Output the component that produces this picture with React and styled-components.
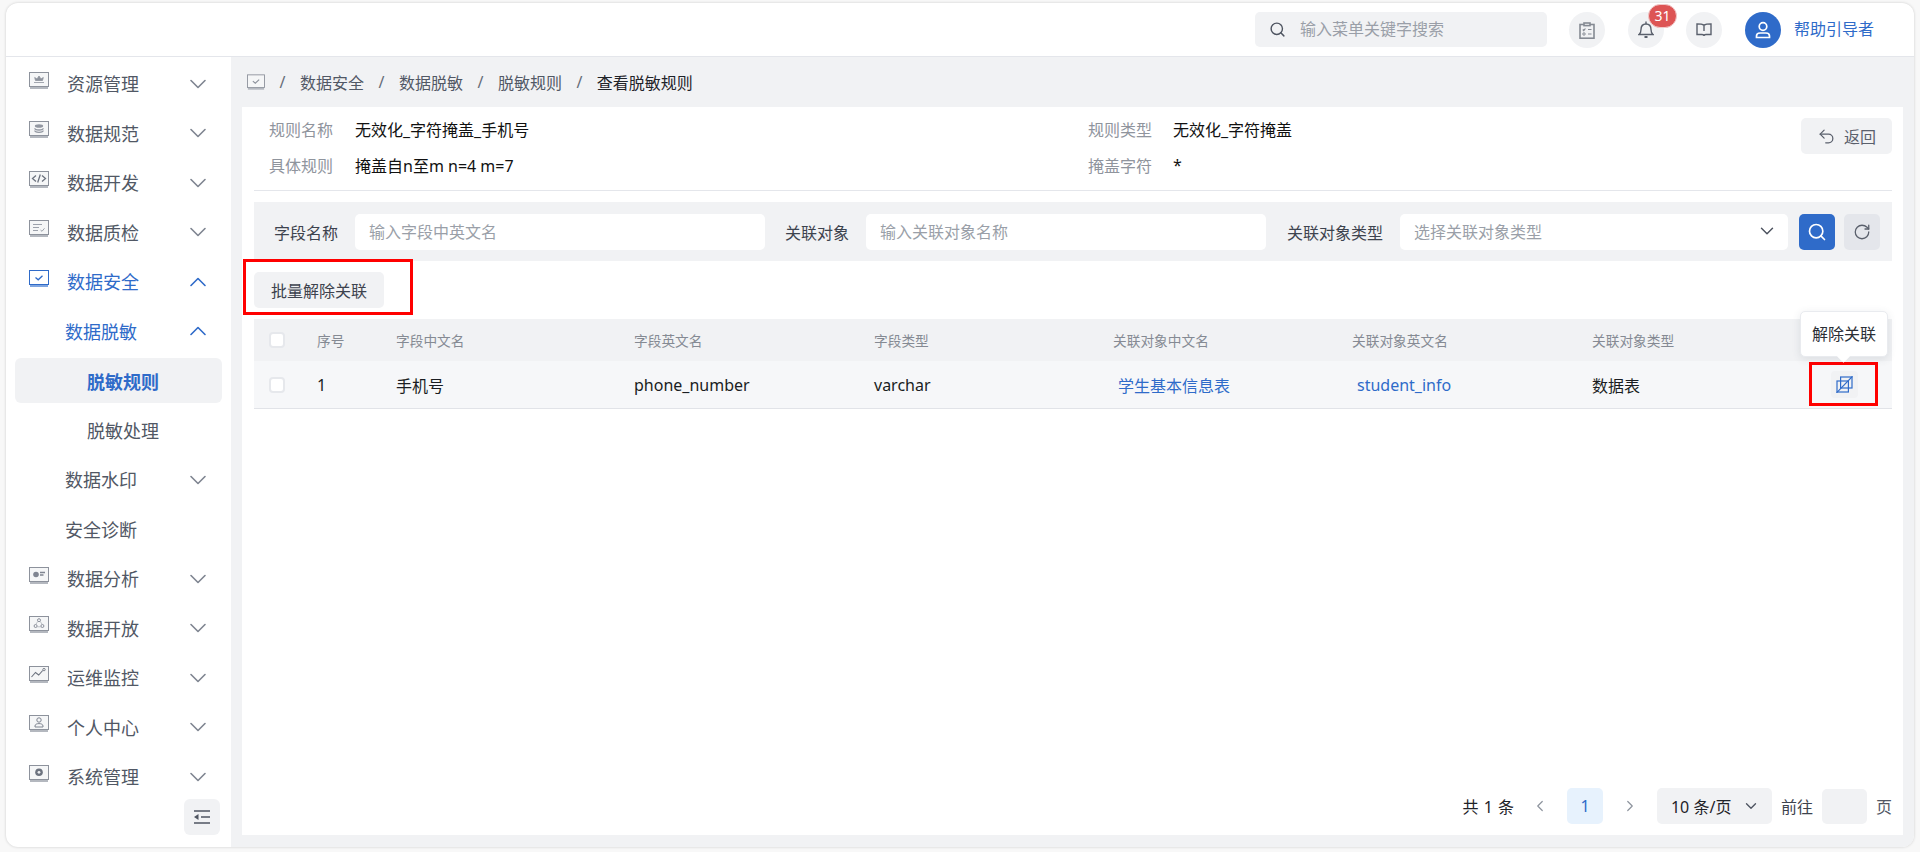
import React from 'react';
import styled, { createGlobalStyle } from 'styled-components';
import {
  Search,
  ChevronDown,
  ChevronUp,
  ChevronLeft,
  ChevronRight,
  RotateCw,
  Undo2,
} from 'lucide-react';

const BLUE = '#2f6bc9';

const GlobalStyle = createGlobalStyle`
  html, body {
    margin: 0;
    padding: 0;
    height: 100%;
    background: #f8f8f8;
  }
  body {
    font-family: "Noto Sans", "Noto Sans CJK SC", sans-serif;
    font-size: 16px;
    color: #1f2329;
    overflow: hidden;
  }
  * {
    box-sizing: border-box;
  }
`;

const Frame = styled.div`
  margin: 3px 6px 0 6px;
  height: 844px;
  border-radius: 12px;
  background: #fff;
  box-shadow: 0 0 3px rgba(0, 0, 0, 0.18);
  overflow: hidden;
  display: flex;
  flex-direction: column;
`;
const Header = styled.header`
  height: 54px;
  flex: none;
  border-bottom: 1px solid #e4e6eb;
  display: flex;
  align-items: flex-start;
  justify-content: flex-end;
  padding: 9px 40px 0 0;
`;
const TopSearch = styled.div`
  width: 292px;
  height: 35px;
  margin-right: 22.5px;
  background: #f1f2f4;
  border-radius: 5px;
  display: flex;
  align-items: center;
  padding-left: 14px;
  gap: 14px;
  color: #9a9fa8;
  svg {
    color: #4f5561;
  }
`;
const TopSearchText = styled.span`
  margin-top: -3px;
`;
const RoundBtn = styled.div`
  position: relative;
  width: 36px;
  height: 36px;
  margin-right: 22.5px;
  border-radius: 50%;
  background: #f1f2f4;
  display: flex;
  align-items: center;
  justify-content: center;
`;
const Badge = styled.span`
  position: absolute;
  top: -8px;
  left: 20px;
  width: 29px;
  height: 24px;
  border-radius: 12px;
  background: #dd5454;
  border: 1px solid #f1c9c9;
  color: #fff;
  font-size: 14px;
  line-height: 22px;
  text-align: center;
`;
const Avatar = styled.div`
  width: 36px;
  height: 36px;
  border-radius: 50%;
  background: ${BLUE};
  display: flex;
  align-items: center;
  justify-content: center;
  margin-right: 13px;
`;
const Helper = styled.span`
  color: ${BLUE};
  line-height: 34px;
`;
const Body = styled.div`
  flex: 1;
  display: flex;
  min-height: 0;
`;
const Sidebar = styled.aside`
  width: 225px;
  flex: none;
  padding-top: 2px;
  display: flex;
  flex-direction: column;
`;
const MenuItem = styled.div`
  flex: none;
  height: 49.5px;
  display: flex;
  align-items: center;
  padding-left: ${(p) => p.$indent}px;
  padding-right: 19px;
  font-size: 18px;
  color: ${(p) => (p.$active ? BLUE : '#515865')};
  svg.chev {
    margin-left: auto;
    color: ${(p) => (p.$active ? BLUE : '#7f8591')};
  }
`;
const MenuLabel = styled.span`
  margin-top: -1px;
`;
const MenuIconBox = styled.span`
  width: 20px;
  height: 18px;
  margin-right: 18px;
  margin-top: -6px;
  display: flex;
`;
const LeafItem = styled.div`
  flex: none;
  height: 45px;
  margin: 2.25px 9px;
  padding-left: 72px;
  display: flex;
  align-items: center;
  font-size: 18px;
  border-radius: 6px;
  background: ${(p) => (p.$selected ? '#f1f2f4' : 'transparent')};
  color: ${(p) => (p.$selected ? BLUE : '#515865')};
  font-weight: ${(p) => (p.$selected ? 700 : 400)};
`;
const CollapseBtn = styled.div`
  width: 36px;
  height: 36px;
  margin: -3px 11px 0 auto;
  border-radius: 6px;
  background: #f1f2f4;
  display: flex;
  align-items: center;
  justify-content: center;
  flex: none;
`;
const Main = styled.main`
  flex: 1;
  min-width: 0;
  background: #f1f2f4;
  padding: 0 11px 12px 11px;
  display: flex;
  flex-direction: column;
`;
const Crumbs = styled.nav`
  height: 50px;
  flex: none;
  display: flex;
  align-items: center;
  padding-left: 5px;
  color: #515865;
`;
const CrumbSep = styled.span`
  margin: 0 14.5px;
  color: #666c78;
`;
const CrumbCurrent = styled.span`
  color: #1f2329;
`;
const Panel = styled.section`
  flex: 1;
  min-height: 0;
  background: #fff;
  padding: 0 11px 11px 12px;
  display: flex;
  flex-direction: column;
`;
const Info = styled.div`
  flex: none;
  height: 84px;
  padding: 5px 0 0 15px;
  border-bottom: 1px solid #e4e6eb;
  display: flex;
  align-items: flex-start;
`;
const InfoGrid = styled.dl`
  margin: 0;
  flex: 1;
  display: grid;
  grid-template-columns: 86px 733px 85px 1fr;
  grid-auto-rows: 36px;
  align-items: center;
`;
const InfoKey = styled.dt`
  color: #8f949d;
  margin-top: -2px;
`;
const InfoValue = styled.dd`
  margin: -2px 0 0;
  color: #111;
`;
const BackBtn = styled.button`
  flex: none;
  width: 91px;
  height: 36px;
  margin-top: 6px;
  border: none;
  border-radius: 5px;
  background: #f1f2f4;
  color: #5a606c;
  font: inherit;
  display: flex;
  align-items: center;
  justify-content: center;
  gap: 8px;
`;
const FilterBar = styled.div`
  flex: none;
  margin-top: 11px;
  height: 59px;
  background: #f1f2f4;
  padding: 12px 12px 11px 20px;
  display: flex;
  align-items: center;
`;
const FilterLabel = styled.label`
  flex: none;
  margin: 0 17px 0 ${(p) => p.$gap || 0}px;
  color: #3d434e;
`;
const Field = styled.div`
  flex: none;
  width: ${(p) => p.$width}px;
  height: 36px;
  background: #fff;
  border-radius: 5px;
  padding: 0 10px 2px 14px;
  display: flex;
  align-items: center;
  justify-content: space-between;
  color: #9a9fa8;
  svg {
    color: #4f5561;
  }
`;
const IconBtn = styled.button`
  flex: none;
  width: 36px;
  height: 36px;
  margin-left: ${(p) => p.$gap}px;
  border: none;
  border-radius: 5px;
  padding: 0;
  background: ${(p) => (p.$primary ? BLUE : '#e4e6eb')};
  color: ${(p) => (p.$primary ? '#fff' : '#5a606c')};
  display: flex;
  align-items: center;
  justify-content: center;
`;
const BatchRow = styled.div`
  position: relative;
  flex: none;
  padding: 11px 0;
`;
const BatchBtn = styled.button`
  display: block;
  width: 130px;
  height: 36px;
  border: none;
  border-radius: 5px;
  background: #f1f2f4;
  color: #3d434e;
  font: inherit;
`;
const RedBox = styled.div`
  position: absolute;
  border: 3px solid #f00;
  left: ${(p) => p.$left}px;
  top: ${(p) => p.$top}px;
  width: ${(p) => p.$w}px;
  height: ${(p) => p.$h}px;
  pointer-events: none;
`;
const Table = styled.div`
  flex: 1;
  min-height: 0;
`;
const Row = styled.div`
  display: grid;
  grid-template-columns: 63px 79px 238px 240px 239px 239px 240px 200px 1fr;
  align-items: center;
  height: ${(p) => (p.$head ? 42 : 48)}px;
  background: ${(p) => (p.$head ? '#f1f2f4' : '#f6f7f9')};
  border-bottom: ${(p) => (p.$head ? 'none' : '1px solid #e1e3e8')};
  color: ${(p) => (p.$head ? '#858a93' : '#1a1d22')};
  font-size: ${(p) => (p.$head ? 13.7 : 16)}px;
`;
const Check = styled.span`
  display: block;
  width: 16px;
  height: 16px;
  margin-left: 15px;
  background: #fff;
  border: 2px solid #e6e8ec;
  border-radius: 4px;
`;
const CellLink = styled.span`
  color: ${BLUE};
  padding-left: 5px;
`;
const Actions = styled.div`
  position: relative;
  height: 100%;
  padding-left: 39px;
  display: flex;
  align-items: center;
`;
const UnlinkBtn = styled.div`
  width: 27px;
  height: 27px;
  margin-top: -1px;
  border-radius: 4px;
  background: #f1f2f4;
  display: flex;
  align-items: center;
  justify-content: center;
`;
const Tooltip = styled.div`
  position: absolute;
  left: 8px;
  top: -50px;
  width: 88px;
  height: 46px;
  border: 1px solid #e9ebef;
  border-radius: 5px;
  background: #fff;
  box-shadow: 0 2px 8px rgba(60, 70, 90, 0.12);
  color: #2b2f36;
  display: flex;
  align-items: center;
  justify-content: center;
  padding-bottom: 2px;
  z-index: 2;
  &::after {
    content: '';
    position: absolute;
    left: 38px;
    bottom: -5px;
    width: 9px;
    height: 9px;
    background: #fff;
    transform: rotate(45deg);
  }
`;
const Pager = styled.div`
  flex: none;
  height: 36px;
  display: flex;
  align-items: center;
  justify-content: flex-end;
  gap: 9px;
  color: #3d434e;
`;
const Total = styled.span`
  color: #1f2329;
  margin-right: -1px;
  word-spacing: 1px;
`;
const PageArrow = styled.span`
  width: 36px;
  height: 36px;
  display: flex;
  align-items: center;
  justify-content: center;
  color: #8d939d;
`;
const PageCurrent = styled.span`
  width: 36px;
  height: 36px;
  border-radius: 5px;
  background: #e7f2fd;
  color: ${BLUE};
  display: flex;
  align-items: center;
  justify-content: center;
`;
const PageSize = styled.div`
  width: 115px;
  height: 36px;
  border-radius: 5px;
  background: #f1f2f4;
  color: #1f2329;
  padding: 0 12px 0 14px;
  display: flex;
  align-items: center;
  justify-content: space-between;
  svg {
    color: #4f5561;
  }
`;
const PageInput = styled.div`
  width: 45px;
  height: 35px;
  border-radius: 5px;
  background: #f1f2f4;
`;
const PageUnit = styled.span`
  color: #515865;
`;
const ScreenSvg = styled.svg`
  flex: none;
  color: ${(p) => (p.$active ? BLUE : '#8d929c')};
`;

// small glyphs that sit inside the screen of each menu icon
const glyphs = {
  res: <path d="M5 10.5h10M6.5 8.5l-.8-3 2.3 1.5L10 4l2 3 2.3-1.5-.8 3z" fill="#8d929c" stroke="#8d929c" strokeWidth="0.8" />,
  spec: (
    <>
      <ellipse cx="10" cy="5" rx="4.2" ry="1.8" fill="#9297a1" />
      <path d="M5.8 7.2c0 1 1.9 1.8 4.2 1.8s4.2-.8 4.2-1.8M5.8 9.6c0 1 1.9 1.8 4.2 1.8s4.2-.8 4.2-1.8" fill="none" stroke="#9297a1" strokeWidth="1.3" />
    </>
  ),
  dev: <path d="M7 4.5L3.5 7.5 7 10.5M13 4.5l3.5 3-3.5 3M11.3 3.5L8.7 11.5" fill="none" stroke="#6d737f" strokeWidth="1.3" />,
  qc: <path d="M4 4.5h9M4 7.5h6M4 10.5h5M11.5 10l1.5 1.3 2.5-3" fill="none" stroke="#9297a1" strokeWidth="0.9" />,
  safe: <path d="M6.5 7.5l2.7 2.3 4.3-4" fill="none" stroke="currentColor" strokeWidth="1.3" />,
  chart: (
    <>
      <circle cx="7" cy="7.5" r="2.8" fill="#7f8591" />
      <path d="M11 5.5h5M11 8h3.5" stroke="#7f8591" strokeWidth="1.4" />
    </>
  ),
  open: (
    <>
      <circle cx="10" cy="4.2" r="1.5" fill="none" stroke="#7f8591" strokeWidth="0.9" />
      <circle cx="6.6" cy="10" r="1.5" fill="none" stroke="#7f8591" strokeWidth="0.9" />
      <circle cx="13.4" cy="10" r="1.5" fill="none" stroke="#7f8591" strokeWidth="0.9" />
      <path d="M8.8 5.4L6.8 8.4M11.2 5.4l2 3M8.2 10.8h3.6" fill="none" stroke="#a5aab2" strokeWidth="0.7" />
    </>
  ),
  ops: (
    <>
      <path d="M2.5 11l4-4.5 3.2 2.5 4-4.5" fill="none" stroke="#6d737f" strokeWidth="1.1" />
      <circle cx="15" cy="3.6" r="1.2" fill="none" stroke="#6d737f" strokeWidth="0.9" />
    </>
  ),
  user: (
    <>
      <circle cx="10" cy="5" r="2.2" fill="none" stroke="#7f8591" strokeWidth="1" />
      <path d="M6 12v-1c0-1.6 1.6-2.4 4-2.4s4 .8 4 2.4v1z" fill="none" stroke="#7f8591" strokeWidth="1" />
    </>
  ),
  sys: (
    <>
      <circle cx="10" cy="7.3" r="3.8" fill="#6d737f" />
      <circle cx="10" cy="7.3" r="1.4" fill="#eceef1" />
    </>
  ),
};

const MonitorIcon = ({ glyph, active, width = 20, height = 18 }) => (
  <ScreenSvg $active={active} width={width} height={height} viewBox="0 0 20 18">
    <rect x="0.5" y="0.5" width="19" height="14" fill={active ? '#fff' : '#f5f6f7'} stroke="currentColor" />
    <rect x="1" y="15" width="18" height="2" fill={active ? '#7fa5e0' : '#b4b8bf'} />
    {glyphs[glyph]}
  </ScreenSvg>
);

const ClipboardIcon = () => (
  <svg width="16" height="17" viewBox="0 0 16 17" fill="none" stroke="#858a93" strokeWidth="1.6">
    <rect x="1" y="2.5" width="14" height="13.7" />
    <rect x="5" y="1" width="6" height="2.6" fill="#f1f2f4" />
    <path d="M3.8 7.5l1 1 1.6-2M9 7.5h3.5M9 12h3.5" strokeWidth="1.2" />
    <circle cx="5" cy="12" r="1.2" strokeWidth="1" />
  </svg>
);

const BellIcon = () => (
  <svg width="16" height="18" viewBox="0 0 16 18" fill="none" stroke="#5a606c" strokeWidth="1.4">
    <path d="M1 13.5c1.5-1 2-2.5 2-5C3 5 5 3 8 3s5 2 5 5.5c0 2.500.5 4 2 5z" />
    <path d="M8 .5V3" />
    <path d="M6.5 16h3" strokeWidth="1.8" />
  </svg>
);

const BookIcon = () => (
  <svg width="16" height="14" viewBox="0 0 16 14" fill="none" stroke="#5a606c" strokeWidth="1.4">
    <path d="M8 2.2C6.5 1.2 4 .9 1 .9v10.600h5c1 0 2 .4 2 1.400 0-1 1-1.400 2-1.400h5V.9c-3 0-5.500.3-7 1.300zM8 2.200V8" />
  </svg>
);

const PersonIcon = () => (
  <svg width="18" height="18" viewBox="0 0 18 18" fill="none" stroke="#fff" strokeWidth="1.7">
    <circle cx="9" cy="5.5" r="3.8" />
    <path d="M2.500 16.500v-1.500c0-1.800 1.500-3 3.500-3h6c2 0 3.500 1.200 3.500 3v1.500z" />
  </svg>
);

// two overlapping sheets with a slash through them
const UnlinkIcon = () => (
  <svg width="17" height="17" viewBox="0 0 17 17" fill="none" stroke={BLUE} strokeWidth="1.2">
    <rect x="4.6" y="1" width="11.4" height="11" />
    <rect x="1" y="5" width="11.4" height="11" />
    <path d="M.5 16.800L16.500 .3" />
  </svg>
);

const CollapseIcon = () => (
  <svg width="16" height="14" viewBox="0 0 16 14" fill="none">
    <path d="M0 1h16M7 7h9M0 13h16" stroke="#4f5561" strokeWidth="1.5" />
    <path d="M0 7l4.500-3v6z" fill="#4f5561" />
  </svg>
);

const menu = [
  { name: '资源管理', glyph: 'res' },
  { name: '数据规范', glyph: 'spec' },
  { name: '数据开发', glyph: 'dev' },
  { name: '数据质检', glyph: 'qc' },
  { name: '数据安全', glyph: 'safe', active: true, open: true },
  { name: '数据脱敏', sub: true, active: true, open: true },
  { name: '脱敏规则', leaf: true, selected: true },
  { name: '脱敏处理', leaf: true },
  { name: '数据水印', sub: true },
  { name: '安全诊断', sub: true, noArrow: true },
  { name: '数据分析', glyph: 'chart' },
  { name: '数据开放', glyph: 'open' },
  { name: '运维监控', glyph: 'ops' },
  { name: '个人中心', glyph: 'user' },
  { name: '系统管理', glyph: 'sys' },
];

const MenuRow = ({ entry }) => {
  if (entry.leaf) {
    return <LeafItem $selected={entry.selected}>{entry.name}</LeafItem>;
  }
  const Arrow = entry.open ? ChevronUp : ChevronDown;
  return (
    <MenuItem $indent={entry.sub ? 59 : 23} $active={entry.active}>
      {entry.glyph && (
        <MenuIconBox>
          <MonitorIcon glyph={entry.glyph} active={entry.active} />
        </MenuIconBox>
      )}
      <MenuLabel>{entry.name}</MenuLabel>
      {!entry.noArrow && <Arrow className="chev" size={28} strokeWidth={1.4} />}
    </MenuItem>
  );
};

const App = () => {
  return (
    <>
      <GlobalStyle />
      <Frame>
        <Header>
          <TopSearch>
            <Search size={17} strokeWidth={2} />
            <TopSearchText>输入菜单关键字搜索</TopSearchText>
          </TopSearch>
          <RoundBtn>
            <ClipboardIcon />
          </RoundBtn>
          <RoundBtn>
            <BellIcon />
            <Badge>31</Badge>
          </RoundBtn>
          <RoundBtn>
            <BookIcon />
          </RoundBtn>
          <Avatar>
            <PersonIcon />
          </Avatar>
          <Helper>帮助引导者</Helper>
        </Header>
        <Body>
          <Sidebar>
            {menu.map((entry) => (
              <MenuRow key={entry.name} entry={entry} />
            ))}
            <CollapseBtn>
              <CollapseIcon />
            </CollapseBtn>
          </Sidebar>
          <Main>
            <Crumbs>
              <MonitorIcon glyph="safe" width={18} height={17} />
              <CrumbSep>/</CrumbSep>
              数据安全
              <CrumbSep>/</CrumbSep>
              数据脱敏
              <CrumbSep>/</CrumbSep>
              脱敏规则
              <CrumbSep>/</CrumbSep>
              <CrumbCurrent>查看脱敏规则</CrumbCurrent>
            </Crumbs>
            <Panel>
              <Info>
                <InfoGrid>
                  <InfoKey>规则名称</InfoKey>
                  <InfoValue>无效化_字符掩盖_手机号</InfoValue>
                  <InfoKey>规则类型</InfoKey>
                  <InfoValue>无效化_字符掩盖</InfoValue>
                  <InfoKey>具体规则</InfoKey>
                  <InfoValue>掩盖自n至m n=4 m=7</InfoValue>
                  <InfoKey>掩盖字符</InfoKey>
                  <InfoValue>*</InfoValue>
                </InfoGrid>
                <BackBtn>
                  <Undo2 size={19} strokeWidth={1.6} />
                  返回
                </BackBtn>
              </Info>
              <FilterBar>
                <FilterLabel>字段名称</FilterLabel>
                <Field $width={410}>输入字段中英文名</Field>
                <FilterLabel $gap={20}>关联对象</FilterLabel>
                <Field $width={400}>输入关联对象名称</Field>
                <FilterLabel $gap={21}>关联对象类型</FilterLabel>
                <Field $width={388}>
                  选择关联对象类型
                  <ChevronDown size={22} strokeWidth={1.6} />
                </Field>
                <IconBtn $primary $gap={11}>
                  <Search size={20} strokeWidth={2} />
                </IconBtn>
                <IconBtn $gap={9}>
                  <RotateCw size={18} strokeWidth={1.7} />
                </IconBtn>
              </FilterBar>
              <BatchRow>
                <BatchBtn>批量解除关联</BatchBtn>
                <RedBox $left={-11} $top={-2} $w={170} $h={56} />
              </BatchRow>
              <Table>
                <Row $head>
                  <Check />
                  <span>序号</span>
                  <span>字段中文名</span>
                  <span>字段英文名</span>
                  <span>字段类型</span>
                  <span>关联对象中文名</span>
                  <span>关联对象英文名</span>
                  <span>关联对象类型</span>
                </Row>
                <Row>
                  <Check />
                  <span>1</span>
                  <span>手机号</span>
                  <span>phone_number</span>
                  <span>varchar</span>
                  <CellLink>学生基本信息表</CellLink>
                  <CellLink>student_info</CellLink>
                  <span>数据表</span>
                  <Actions>
                    <UnlinkBtn>
                      <UnlinkIcon />
                    </UnlinkBtn>
                    <Tooltip>解除关联</Tooltip>
                    <RedBox $left={17} $top={1} $w={69} $h={44} />
                  </Actions>
                </Row>
              </Table>
              <Pager>
                <Total>共 1 条</Total>
                <PageArrow>
                  <ChevronLeft size={18} strokeWidth={1.6} />
                </PageArrow>
                <PageCurrent>1</PageCurrent>
                <PageArrow>
                  <ChevronRight size={18} strokeWidth={1.6} />
                </PageArrow>
                <PageSize>
                  10 条/页
                  <ChevronDown size={18} strokeWidth={1.8} />
                </PageSize>
                前往
                <PageInput />
                <PageUnit>页</PageUnit>
              </Pager>
            </Panel>
          </Main>
        </Body>
      </Frame>
    </>
  );
};

export default App;
